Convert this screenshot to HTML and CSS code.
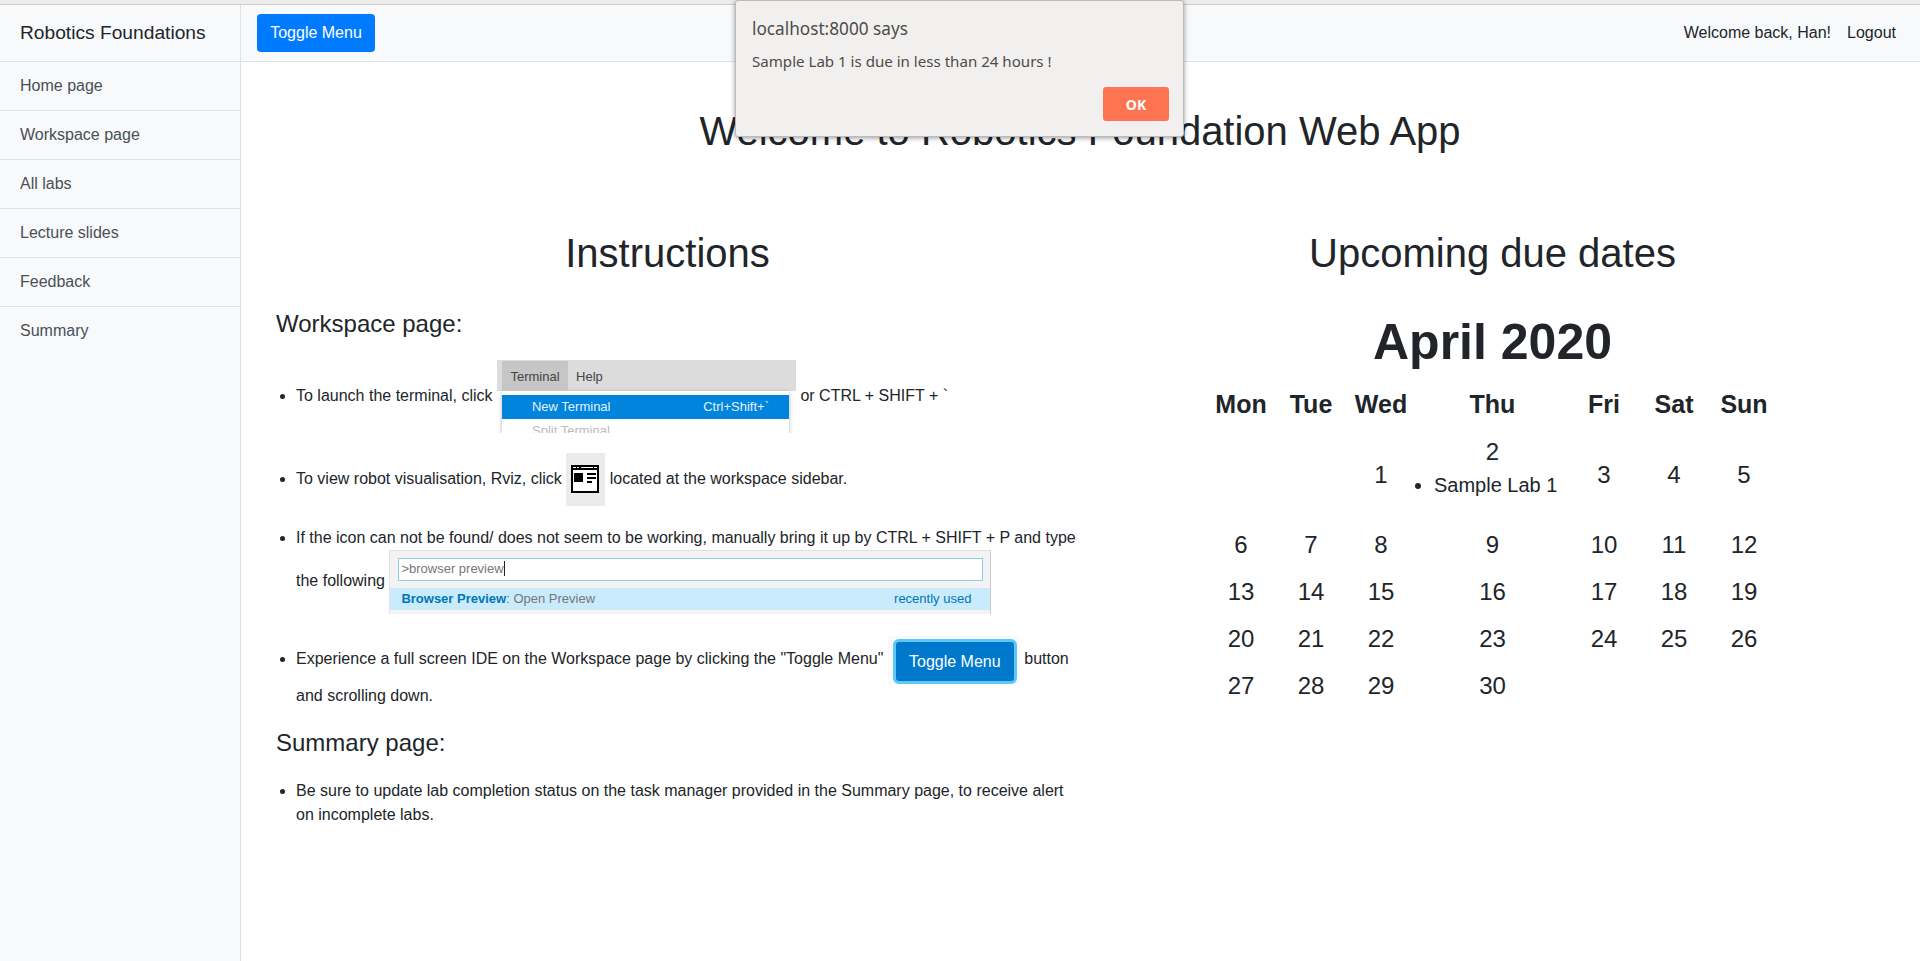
FILE: index.html
```html
<!DOCTYPE html>
<html lang="en">
<head>
    <meta charset="UTF-8">
    <title>Robotics Foundations</title>
    <link rel="stylesheet" href="styles.css">
</head>
<body>
    <div id="wrapper">
        <nav id="sidebar">
            <div class="brand">Robotics Foundations</div>
            <a class="side-link" href="#">Home page</a>
            <a class="side-link" href="#">Workspace page</a>
            <a class="side-link" href="#">All labs</a>
            <a class="side-link" href="#">Lecture slides</a>
            <a class="side-link" href="#">Feedback</a>
            <a class="side-link" href="#">Summary</a>
        </nav>
        <div id="content">
            <header class="topbar">
                <button class="btn-toggle">Toggle Menu</button>
                <div class="topbar-right">
                    <a class="top-link" href="#">Welcome back, Han!</a>
                    <a class="top-link" href="#">Logout</a>
                </div>
            </header>
            <main class="page">
                <h1 class="page-title">Welcome to Robotics Foundation Web App</h1>
                <div class="columns">
                    <section>
                        <h2 class="col-title">Instructions</h2>
                        <div class="notes">
                            <h4 class="note-title">Workspace page:</h4>
                            <ul class="steps">
                                <li>To launch the terminal, click
                                    <span class="shot shot-terminal">
                                        <span class="menu-bar"><span class="menu-tab">Terminal</span><span class="menu-help">Help</span></span>
                                        <span class="menu-list">
                                            <span class="menu-row"><span>New Terminal</span><span>Ctrl+Shift+`</span></span>
                                            <span class="menu-off">Split Terminal</span>
                                        </span>
                                    </span>
                                    or CTRL + SHIFT + `</li>
                                <li>To view robot visualisation, Rviz, click
                                    <span class="shot shot-icon">
                                        <svg width="28" height="28" viewBox="0 0 28 28">
                                            <rect x="1" y="1" width="26" height="26" fill="#fff" stroke="#000" stroke-width="2"/>
                                            <rect x="1" y="1" width="26" height="4" fill="#000"/>
                                            <path d="M2 2.5h3M6 2.5h2M10 2.5h12M23 2.5h3" stroke="#fff" stroke-width="1"/>
                                            <rect x="3" y="8" width="9" height="9" fill="#000"/>
                                            <path d="M16 9h9M16 13h9M16 17h5" stroke="#000" stroke-width="2"/>
                                        </svg>
                                    </span>
                                    located at the workspace sidebar.</li>
                                <li class="step-tall">If the icon can not be found/ does not seem to be working, manually bring it up by CTRL + SHIFT + P and type the following
                                    <span class="shot shot-preview">
                                        <span class="preview-input">&gt;browser preview<span class="caret"></span></span>
                                        <span class="preview-row"><span><b>Browser Preview</b>: Open Preview</span><span class="preview-tag">recently used</span></span>
                                    </span></li>
                                <li>Experience a full screen IDE on the Workspace page by clicking the "Toggle Menu"
                                    <span class="shot shot-button"><span class="btn-focus">Toggle Menu</span></span>
                                    button and scrolling down.</li>
                            </ul>
                            <h4 class="note-title">Summary page:</h4>
                            <ul class="steps-plain">
                                <li>Be sure to update lab completion status on the task manager provided in the Summary page, to receive alert on incomplete labs.</li>
                            </ul>
                        </div>
                    </section>
                    <section>
                        <h2 class="col-title">Upcoming due dates</h2>
                        <h3 class="month">April 2020</h3>
                        <table class="calendar">
                            <thead>
                                <tr><th>Mon</th><th>Tue</th><th>Wed</th><th class="wide">Thu</th><th>Fri</th><th>Sat</th><th>Sun</th></tr>
                            </thead>
                            <tbody>
                                <tr>
                                    <td></td><td></td><td>1</td>
                                    <td>2<ul class="due"><li>Sample Lab 1</li></ul></td>
                                    <td>3</td><td>4</td><td>5</td>
                                </tr>
                                <tr><td>6</td><td>7</td><td>8</td><td>9</td><td>10</td><td>11</td><td>12</td></tr>
                                <tr><td>13</td><td>14</td><td>15</td><td>16</td><td>17</td><td>18</td><td>19</td></tr>
                                <tr><td>20</td><td>21</td><td>22</td><td>23</td><td>24</td><td>25</td><td>26</td></tr>
                                <tr><td>27</td><td>28</td><td>29</td><td>30</td><td></td><td></td><td></td></tr>
                            </tbody>
                        </table>
                    </section>
                </div>
            </main>
        </div>
    </div>

    <div class="alert-box">
        <div class="alert-title">localhost:8000 says</div>
        <div class="alert-text">Sample Lab 1 is due in less than 24 hours !</div>
        <div class="alert-actions"><button class="alert-ok">OK</button></div>
    </div>
</body>
</html>
```

FILE: styles.css
```css
* {
    box-sizing: border-box;
}
html, body {
    height: 100%;
}
body {
    margin: 0;
    font-family: "Liberation Sans", Arial, sans-serif;
    font-size: 16px;
    line-height: 24px;
    color: #212529;
    background: #fff;
    border-top: 4px solid #eeecea;
    overflow: hidden;
}
#wrapper {
    display: flex;
    height: 100%;
    border-top: 1px solid #ccc;
}
a {
    color: inherit;
    text-decoration: none;
}

/* sidebar */
#sidebar {
    width: 241px;
    flex-shrink: 0;
    background: #f8f9fa;
    border-right: 1px solid #dee2e6;
}
.brand {
    height: 57px;
    padding: 0 20px;
    display: flex;
    align-items: center;
    font-size: 19.2px;
    border-bottom: 1px solid #dee2e6;
}
.side-link {
    display: block;
    padding: 12px 20px;
    color: #495057;
    border-bottom: 1px solid #dee2e6;
}
.side-link:last-child {
    border-bottom: none;
}

/* top bar */
#content {
    flex: 1;
    min-width: 0;
}
.topbar {
    height: 57px;
    padding: 9px 24px 9px 16px;
    display: flex;
    justify-content: space-between;
    align-items: center;
    background: #f8f9fa;
    border-bottom: 1px solid #dee2e6;
}
.btn-toggle {
    height: 38px;
    width: 118px;
    padding: 0;
    font-family: inherit;
    font-size: 16px;
    color: #fff;
    background: #007bff;
    border: none;
    border-radius: 4px;
}
.topbar-right {
    display: flex;
    gap: 16px;
}

/* page */
.page {
    padding: 0 15px 0 14px;
}
.page-title {
    margin: 45px 0 0;
    font-size: 40px;
    font-weight: 400;
    line-height: 48px;
    text-align: center;
}
.columns {
    display: grid;
    grid-template-columns: 1fr 1fr;
    margin-top: 74px;
}
.col-title {
    margin: 0 0 8px;
    font-size: 40px;
    font-weight: 400;
    line-height: 48px;
    text-align: center;
}
.notes {
    padding-left: 21px;
}
.note-title {
    margin: 17px 0 22px;
    font-size: 24px;
    font-weight: 400;
    line-height: 29px;
}
.note-title:first-child {
    margin-top: 32px;
}
.steps, .steps-plain {
    margin: 0;
    padding-left: 20px;
}
.steps li {
    margin-bottom: 20px;
}
.steps .step-tall {
    margin-bottom: 22px;
}
.steps-plain {
    margin-top: 6px;
}

/* little screenshots inside the list */
.shot {
    display: inline-block;
    vertical-align: middle;
    overflow: hidden;
}
.shot-terminal {
    width: 299px;
    height: 73px;
    font-size: 13px;
    line-height: 16px;
    color: #444;
}
.menu-bar {
    display: flex;
    height: 31px;
    padding-top: 1px;
    padding-left: 5px;
    background: #dcdcdc;
}
.menu-tab {
    padding: 8px 8.5px 0;
    background: #c6c6c6;
}
.menu-help {
    padding: 8px 0 0 8px;
}
.menu-list {
    display: block;
    width: 287px;
    height: 60px;
    margin-left: 5px;
    padding-top: 4px;
    background: #fff;
    box-shadow: 0 1px 4px rgba(0, 0, 0, 0.3);
}
.menu-row {
    display: flex;
    justify-content: space-between;
    height: 24px;
    padding: 4px 20px 0 30px;
    color: #e3f2fd;
    background: #0084dc;
}
.menu-off {
    display: block;
    padding: 4px 0 0 30px;
    color: #bbb;
}
.shot-icon {
    width: 39px;
    height: 53px;
    padding: 12px 0 0 5px;
    line-height: 0;
    background: #ebebeb;
}
.shot-preview {
    width: 602px;
    height: 64px;
    padding: 7px 7px 0 8px;
    font-size: 13px;
    line-height: 16px;
    color: #777;
    background: #f3f3f3;
    border-left: 1px solid #dde3e8;
    border-right: 1px solid #ccc;
    border-top: 1px solid #e0e0e0;
}
.preview-input {
    display: block;
    height: 23px;
    padding: 2px;
    background: #fff;
    border: 1px solid #8fd0e8;
}
.caret {
    display: inline-block;
    width: 1px;
    height: 15px;
    vertical-align: -3px;
    background: #222;
}
.preview-row {
    display: flex;
    justify-content: space-between;
    height: 22px;
    margin: 7px -7px 0 -8px;
    padding: 3px 19px 0 11px;
    background: #c9ebfc;
}
.preview-row b, .preview-tag {
    color: #0076b8;
}
.shot-button {
    width: 132px;
    height: 48px;
    padding: 3px 3px 0 5px;
    background: #f8f9fa;
}
.btn-focus {
    display: block;
    height: 45px;
    line-height: 39px;
    text-align: center;
    color: #fff;
    background: #0078cc;
    border: 3px solid #5bc8f5;
    border-radius: 6px;
}

/* calendar */
.month {
    margin: 35px 0 0;
    font-size: 50px;
    font-weight: 700;
    line-height: 60px;
    text-align: center;
}
.calendar {
    margin: 8px auto 0;
    border-collapse: collapse;
    font-size: 24px;
    line-height: 36px;
}
.calendar th, .calendar td {
    width: 70px;
    padding: 5.5px 0;
    text-align: center;
}
.calendar th {
    padding-bottom: 6.5px;
    font-size: 25px;
}
.calendar .wide {
    width: 153px;
}
.due {
    margin: 0 0 16px;
    padding-left: 18px;
    font-size: 20px;
    line-height: 30px;
    text-align: left;
}

/* browser alert */
.alert-box {
    position: absolute;
    left: 735px;
    top: 0;
    width: 449px;
    height: 137px;
    padding: 16px 14px 0 16px;
    font-family: "Noto Sans", sans-serif;
    color: #4c4c4c;
    background: #f2f0ee;
    border: 1px solid #bbb;
    border-radius: 3px;
    box-shadow: 0 1px 5px rgba(0, 0, 0, 0.4);
}
.alert-title {
    font-size: 17.2px;
    line-height: 24px;
}
.alert-text {
    margin-top: 8px;
    font-size: 15.1px;
    line-height: 24px;
}
.alert-actions {
    display: flex;
    justify-content: flex-end;
    margin-top: 14px;
}
.alert-ok {
    width: 66px;
    height: 34px;
    padding: 0;
    font-family: inherit;
    font-size: 14px;
    font-weight: 700;
    color: #fff;
    background: #ff7350;
    border: none;
    border-radius: 3px;
}
```
